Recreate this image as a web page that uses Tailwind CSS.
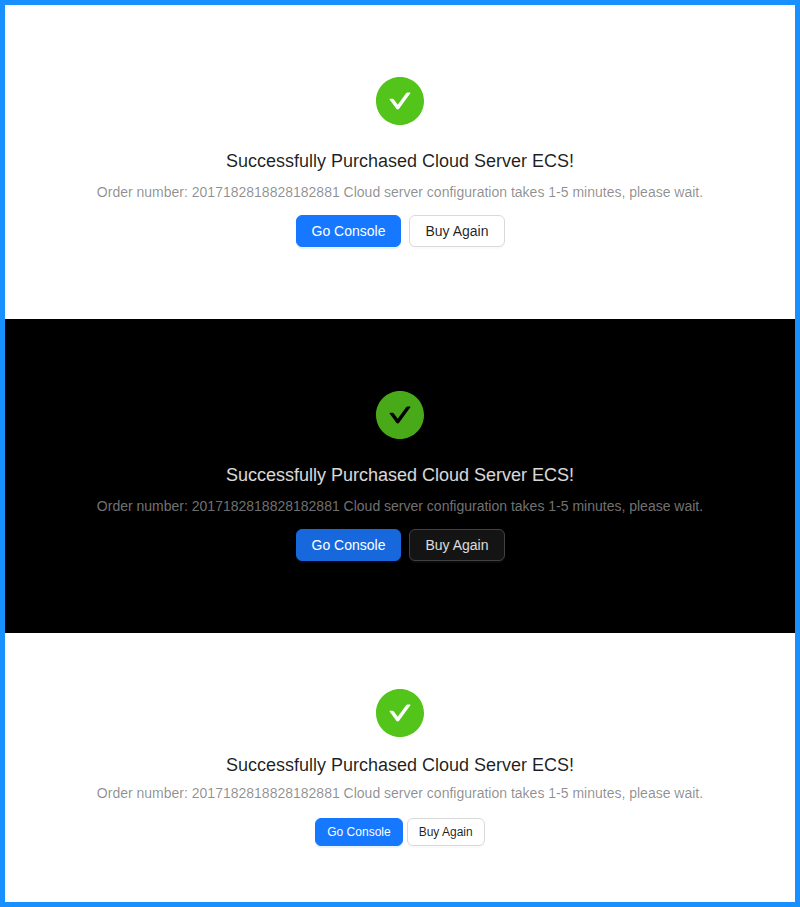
<!DOCTYPE html>
<html lang="en"><head><meta charset="utf-8"><title>Result</title>
<script src="https://cdn.jsdelivr.net/npm/@tailwindcss/browser@4"></script></head>
<body class="bg-white">
<svg class="hidden"><symbol id="check" viewBox="64 64 896 896"><path d="M512 64C264.6 64 64 264.6 64 512s200.6 448 448 448 448-200.6 448-448S759.400 64 512 64zm193.500 301.700l-210.600 292a31.800 31.800 0 0 1-51.700 0L318.500 484.900c-3.800-5.300 0-12.700 6.500-12.700h46.900c10.200 0 19.900 4.900 25.900 13.300l71.200 98.800 157.200-218c6-8.300 15.600-13.300 25.900-13.300H699c6.500 0 10.300 7.400 6.500 12.700z"/></symbol></svg>
<main class="w-[800px] h-[907px] border-[5px] border-[#1890ff] font-['Liberation_Sans',sans-serif] text-sm text-center">
<section class="h-[314px] bg-white flex flex-col items-center pt-[72px]">
<svg class="size-12 fill-[#52c41a]"><use href="#check"/></svg>
<h2 class="mt-5 text-lg leading-8 text-black/88">Successfully Purchased Cloud Server ECS!</h2>
<p class="mt-1 leading-[22px] text-black/45">Order number: 2017182818828182881 Cloud server configuration takes 1-5 minutes, please wait.</p>
<div class="mt-3 flex gap-2">
<button class="h-8 px-[15px] rounded-md border border-[#1677ff] bg-[#1677ff] text-white shadow-[0_2px_0_rgba(5,145,255,0.1)]">Go Console</button>
<button class="h-8 px-[15px] rounded-md border border-[#d9d9d9] bg-white text-black/88 shadow-[0_2px_0_rgba(0,0,0,0.02)]">Buy Again</button>
</div></section>
<section class="h-[314px] bg-black flex flex-col items-center pt-[72px]">
<svg class="size-12 fill-[#49aa19]"><use href="#check"/></svg>
<h2 class="mt-5 text-lg leading-8 text-white/85">Successfully Purchased Cloud Server ECS!</h2>
<p class="mt-1 leading-[22px] text-white/45">Order number: 2017182818828182881 Cloud server configuration takes 1-5 minutes, please wait.</p>
<div class="mt-3 flex gap-2">
<button class="h-8 px-[15px] rounded-md border border-[#1668dc] bg-[#1668dc] text-white shadow-[0_2px_0_rgba(0,60,180,0.1)]">Go Console</button>
<button class="h-8 px-[15px] rounded-md border border-[#424242] bg-[#141414] text-white/85 shadow-[0_2px_0_rgba(255,255,255,0.04)]">Buy Again</button>
</div></section>
<section class="h-[269px] bg-white flex flex-col items-center pt-14">
<svg class="size-12 fill-[#52c41a]"><use href="#check"/></svg>
<h2 class="mt-3 text-lg leading-8 text-black/88">Successfully Purchased Cloud Server ECS!</h2>
<p class="mt-px leading-[22px] text-black/45">Order number: 2017182818828182881 Cloud server configuration takes 1-5 minutes, please wait.</p>
<div class="mt-[14px] flex gap-1">
<button class="h-7 px-[11px] rounded-md border border-[#1677ff] bg-[#1677ff] text-xs text-white shadow-[0_2px_0_rgba(5,145,255,0.1)]">Go Console</button>
<button class="h-7 px-[11px] rounded-md border border-[#d9d9d9] bg-white text-xs text-black/88 shadow-[0_2px_0_rgba(0,0,0,0.02)]">Buy Again</button>
</div></section>
</main></body></html>
